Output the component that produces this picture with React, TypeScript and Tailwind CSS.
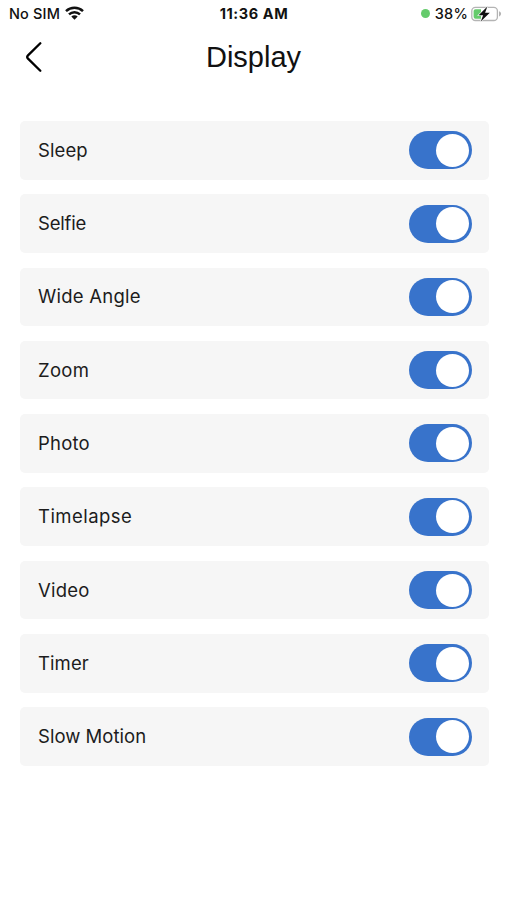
import { useState } from "react";

type Mode = {
  label: string;
  spacing: string;
};

const modes: Mode[] = [
  { label: "Sleep", spacing: "tracking-[0.1px]" },
  { label: "Selfie", spacing: "tracking-[-0.2px]" },
  { label: "Wide Angle", spacing: "tracking-[0.25px]" },
  { label: "Zoom", spacing: "tracking-[0.3px]" },
  { label: "Photo", spacing: "tracking-[0.2px]" },
  { label: "Timelapse", spacing: "tracking-[0.45px]" },
  { label: "Video", spacing: "tracking-[0.2px]" },
  { label: "Timer", spacing: "tracking-[0.1px]" },
  { label: "Slow Motion", spacing: "tracking-[0.03px]" },
];

function WifiIcon() {
  return (
    <svg
      width="19"
      height="14"
      viewBox="0 0 19 14"
      fill="none"
      stroke="#111"
      strokeWidth="2.5"
      className="mb-[2px]"
    >
      <path d="M1 5.1C5.8.6 13.2.6 18 5.1" />
      <path d="M4 8.3C7.1 5.4 11.9 5.4 15 8.3" />
      <path d="M6.3 10.6C8.1 8.9 10.9 8.9 12.7 10.6L9.5 13.8Z" fill="#111" stroke="none" />
    </svg>
  );
}

function BatteryIcon() {
  return (
    <svg width="31" height="16" viewBox="0 0 31 16" fill="none">
      <rect x="0.8" y="1.3" width="25.6" height="13.2" rx="3.6" stroke="#b4b4b4" strokeWidth="1.3" />
      <path d="M4.5 3.2H10V12.7H4.5A1.9 1.9 0 0 1 2.6 10.8V5.1A1.9 1.9 0 0 1 4.5 3.2Z" fill="#65cb6c" />
      <path d="M28 5.3C30.8 6.4 30.8 9.4 28 10.5Z" fill="#b4b4b4" />
      <path
        d="M16.4 0.6L7.6 9.2H12.1L9.8 15.4L18.8 6.8H14.1Z"
        fill="#111"
        stroke="#fff"
        strokeWidth="1.2"
        paintOrder="stroke"
      />
    </svg>
  );
}

function StatusBar() {
  return (
    <div className="grid h-[27px] grid-cols-3 items-center pr-[5px] pl-[9px] font-['Inter',sans-serif] text-[14.5px] text-[#111]">
      <div className="flex items-center gap-[5px] font-medium">
        <span className="tracking-[0.15px]">No SIM</span>
        <WifiIcon />
      </div>
      <div className="-ml-[3px] text-center font-bold tracking-[0.6px]">11:36 AM</div>
      <div className="flex items-center justify-end font-medium">
        <span className="mr-[5px] size-[9px] rounded-full bg-[#65cb6c]" />
        <span className="mr-[3px] tracking-[0.2px]">38%</span>
        <BatteryIcon />
      </div>
    </div>
  );
}

function Toggle({ label }: { label: string }) {
  const [on, setOn] = useState(true);

  return (
    <button
      role="switch"
      aria-checked={on}
      aria-label={label}
      onClick={() => setOn(!on)}
      className={`flex h-[38px] w-[62.5px] items-center rounded-full px-[2.5px] ${
        on ? "justify-end bg-[#3873cb]" : "justify-start bg-[#d4d4d4]"
      }`}
    >
      <span className="size-[33px] rounded-full bg-white" />
    </button>
  );
}

export default function App() {
  return (
    <main className="min-h-screen bg-white">
      <StatusBar />

      <header className="grid h-[60px] grid-cols-[48px_1fr_48px] items-center">
        <button aria-label="Back" className="pb-px pl-[25px]">
          <svg width="18" height="32" viewBox="0 0 18 32" fill="none" stroke="#000" strokeWidth="2.3">
            <path d="M15.3 2.2L3 14.4Q1.4 16 3 17.6L15.3 29.8" strokeLinecap="round" />
          </svg>
        </button>
        <h1 className="pt-px text-center font-['Liberation_Sans',sans-serif] text-[29px] leading-none text-[#111]">
          Display
        </h1>
      </header>

      <ul className="flex flex-col gap-[14.8px] pt-[34px] pr-[18px] pl-5">
        {modes.map((mode) => (
          <li
            key={mode.label}
            className="flex h-[58.5px] items-center justify-between rounded-[5px] bg-[#f6f6f6] pr-[17.5px] pl-[18px]"
          >
            <span className={`pt-px font-['Inter',sans-serif] text-[18.5px] text-[#1c1c1c] ${mode.spacing}`}>
              {mode.label}
            </span>
            <Toggle label={mode.label} />
          </li>
        ))}
      </ul>
    </main>
  );
}
